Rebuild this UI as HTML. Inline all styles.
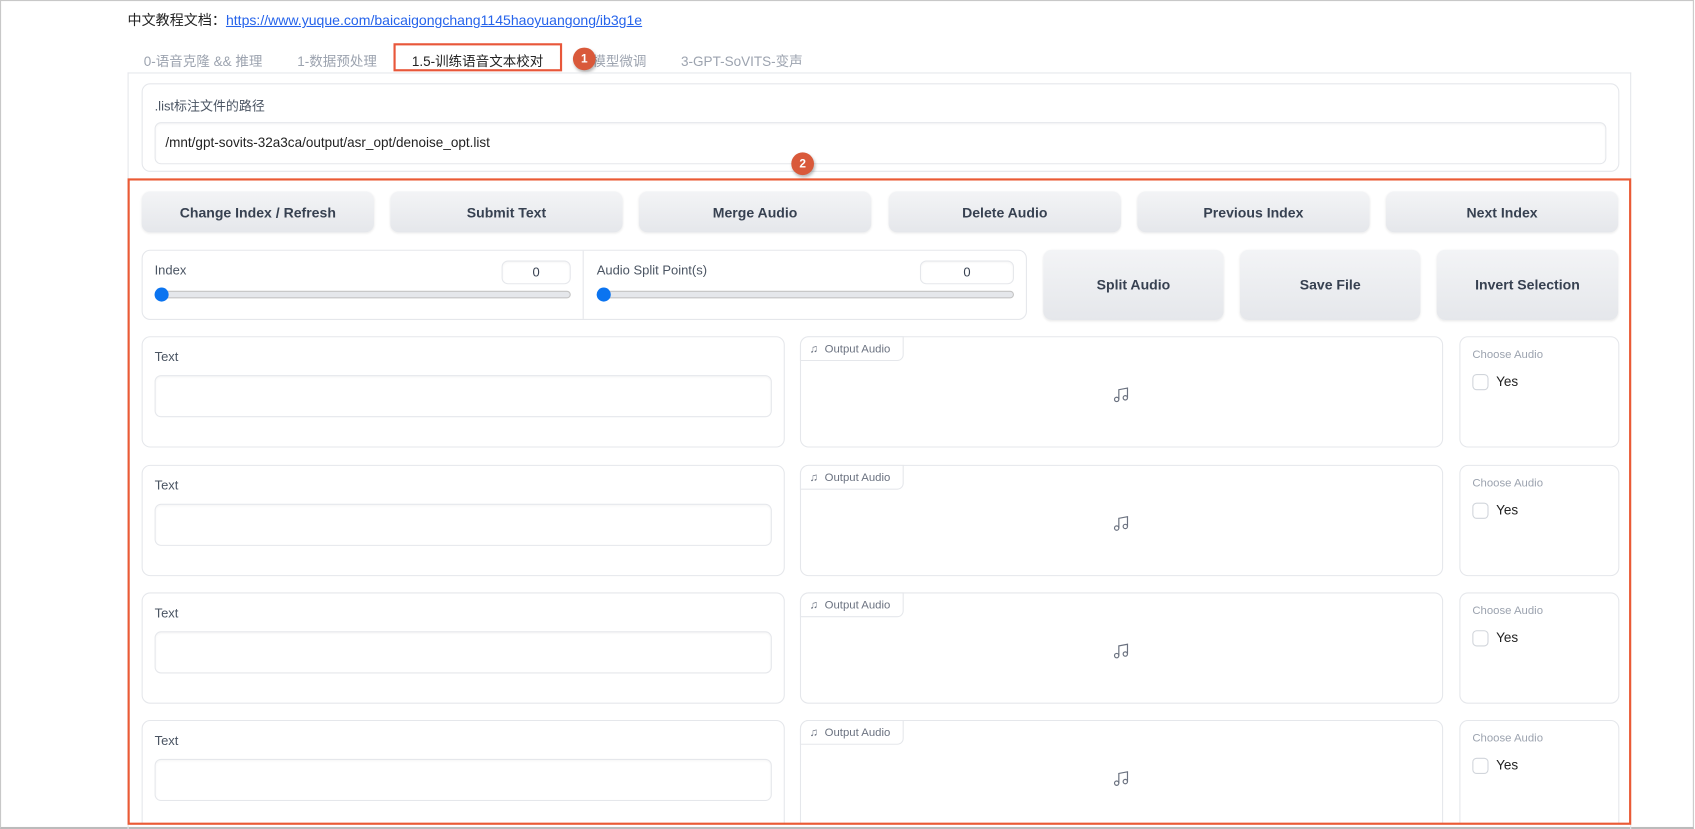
<!DOCTYPE html>
<html><head><meta charset="utf-8"><style>
html,body{margin:0;padding:0;width:1695px;height:829px;overflow:hidden;background:#fff}
#s{position:absolute;left:0;top:0;width:1568px;height:767px;transform:scale(1.081);transform-origin:0 0;font-family:"Liberation Sans","Noto Sans CJK SC",sans-serif;color:#374151}
.a{position:absolute;box-sizing:border-box}
.frame{left:0;top:0;width:1567px;height:767px;border:1px solid #c8c8c8;border-bottom:2px solid #bbb}
.blk{border:1px solid #e5e7eb;border-radius:8px;background:#fff}
.btn{border-radius:8px;background:linear-gradient(#f3f4f6,#e5e7eb);box-shadow:0 1px 2px rgba(0,0,0,.08);font-weight:bold;font-size:13px;color:#374151;display:flex;align-items:center;justify-content:center}
.lbl{font-size:12px;color:#4b5563}
.ta{border:1px solid #e5e7eb;border-radius:6px;background:#fff;box-shadow:inset 0 1px 2px rgba(0,0,0,.04)}
.tab{font-size:12.5px;color:#9ca3af;top:46px}
.circ{width:21px;height:21px;border-radius:50%;background:#d9593a;color:#fff;font-size:11px;font-weight:bold;display:flex;align-items:center;justify-content:center;box-shadow:1px 2px 3px rgba(0,0,0,.3)}
.tag{border:1px solid #e5e7eb;border-radius:0 0 6px 0;border-top-left-radius:8px;font-size:10.5px;color:#6b7280;background:#fff;display:flex;align-items:center;padding-left:8px;gap:6px}
#clip{position:absolute;left:0;top:0;width:1568px;height:762px;overflow:hidden}
</style></head><body><div id="s">
<div class="a frame"></div>
<div class="a" style="left:118px;top:8px;font-size:13px;color:#222">中文教程文档：<span style="color:#2563eb;text-decoration:underline">https://www.yuque.com/baicaigongchang1145haoyuangong/ib3g1e</span></div>
<div class="a tab" style="left:133px">0-语音克隆 &amp;&amp; 推理</div>
<div class="a tab" style="left:275px">1-数据预处理</div>
<div class="a" style="left:364px;top:40px;width:156px;height:26px;border:2px solid #e8573a;background:#fff"></div>
<div class="a" style="left:381px;top:46px;font-size:12.5px;color:#222">1.5-训练语音文本校对</div>
<div class="a tab" style="left:548px">模型微调</div>
<div class="a tab" style="left:630px">3-GPT-SoVITS-变声</div>
<div class="a circ" style="left:530px;top:44px">1</div>
<div class="a" style="left:118px;top:67px;width:1391px;height:700px;border:1px solid #e5e7eb;border-bottom:none"></div>
<div class="a blk" style="left:131px;top:77px;width:1367px;height:82px"></div>
<div class="a lbl" style="left:143px;top:89px">.list标注文件的路径</div>
<div class="a ta" style="left:143px;top:113px;width:1343px;height:39px;font-size:12.5px;color:#222;padding:11px 0 0 9px">/mnt/gpt-sovits-32a3ca/output/asr_opt/denoise_opt.list</div>
<div class="a btn" style="left:131px;top:177px;width:215px;height:38px">Change Index / Refresh</div>
<div class="a btn" style="left:361px;top:177px;width:215px;height:38px">Submit Text</div>
<div class="a btn" style="left:591px;top:177px;width:215px;height:38px">Merge Audio</div>
<div class="a btn" style="left:822px;top:177px;width:215px;height:38px">Delete Audio</div>
<div class="a btn" style="left:1052px;top:177px;width:215px;height:38px">Previous Index</div>
<div class="a btn" style="left:1282px;top:177px;width:215px;height:38px">Next Index</div>
<div class="a blk" style="left:131px;top:231px;width:819px;height:65px"></div>
<div class="a" style="left:539px;top:232px;width:1px;height:63px;background:#e5e7eb"></div>
<div class="a lbl" style="left:143px;top:243px">Index</div>
<div class="a ta" style="left:464px;top:241px;width:64px;height:22px;font-size:12px;text-align:center;line-height:21px">0</div>
<div class="a" style="left:143px;top:269px;width:385px;height:7px;border:1px solid #c4c4c4;border-radius:4px;background:#e5e7eb"></div>
<div class="a" style="left:143px;top:266px;width:13px;height:13px;border-radius:50%;background:#0b74f0"></div>
<div class="a lbl" style="left:552px;top:243px">Audio Split Point(s)</div>
<div class="a ta" style="left:851px;top:241px;width:87px;height:22px;font-size:12px;text-align:center;line-height:21px">0</div>
<div class="a" style="left:552px;top:269px;width:386px;height:7px;border:1px solid #c4c4c4;border-radius:4px;background:#e5e7eb"></div>
<div class="a" style="left:552px;top:266px;width:13px;height:13px;border-radius:50%;background:#0b74f0"></div>
<div class="a btn" style="left:965px;top:231px;width:167px;height:65px">Split Audio</div>
<div class="a btn" style="left:1147px;top:231px;width:167px;height:65px">Save File</div>
<div class="a btn" style="left:1329px;top:231px;width:168px;height:65px">Invert Selection</div>

<div id="clip"></div>
<div class="a" style="left:118px;top:165px;width:1391px;height:598px;border:2.5px solid #ea5a35"></div>
<div class="a circ" style="left:732px;top:141px">2</div>
</div>
<script>
var h='';[311,430,548,666].forEach(function(y){
h+='<div class="a blk" style="left:131px;top:'+y+'px;width:595px;height:103px"></div>'+
'<div class="a lbl" style="left:143px;top:'+(y+12)+'px">Text</div>'+
'<div class="a ta" style="left:143px;top:'+(y+36)+'px;width:571px;height:39px"></div>'+
'<div class="a blk" style="left:740px;top:'+y+'px;width:595px;height:103px"></div>'+
'<div class="a tag" style="left:740px;top:'+y+'px;width:96px;height:23px"><span>♫</span>Output Audio</div>'+
'<svg class="a" style="left:1029px;top:'+(y+46)+'px" width="16" height="16" viewBox="0 0 16 16" fill="none" stroke="#6b7280" stroke-width="1.1"><circle cx="4" cy="12.5" r="2"/><circle cx="12" cy="11" r="2"/><path d="M6 12.5V3.5L14 2V11"/></svg>'+
'<div class="a blk" style="left:1350px;top:'+y+'px;width:148px;height:103px"></div>'+
'<div class="a" style="left:1362px;top:'+(y+11)+'px;font-size:10.5px;color:#9ca3af">Choose Audio</div>'+
'<div class="a" style="left:1362px;top:'+(y+35)+'px;width:15px;height:15px;border:1px solid #d1d5db;border-radius:4px;background:#fff"></div>'+
'<div class="a" style="left:1384px;top:'+(y+35)+'px;font-size:12.5px;color:#222">Yes</div>';
});document.getElementById('clip').innerHTML=h;
</script>
</body></html>
